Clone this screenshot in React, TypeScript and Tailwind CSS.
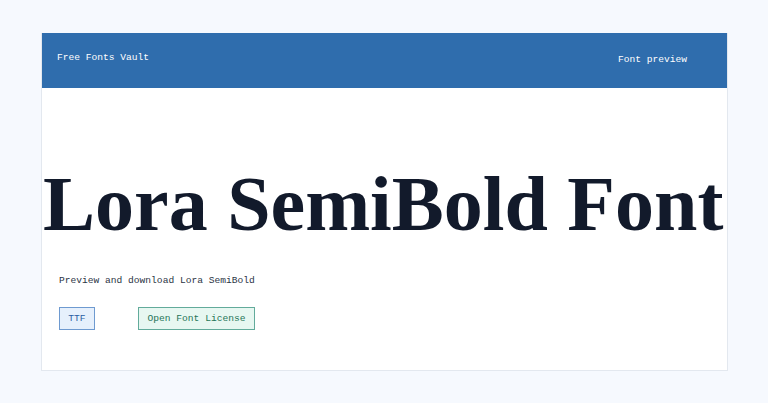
import React from 'react';

const mono = { fontFamily: '"Liberation Mono", monospace' };

const App: React.FC = () => {
  return (
    <div className="min-h-screen w-full bg-[#f6f9fe] pt-[33px] px-[41px]">
      <div className="w-[687px] h-[338px] bg-white border border-[#e3e8ef] border-t-0 flex flex-col">
        {/* Header */}
        <header
          className="h-[55px] bg-[#2f6dad] flex items-start justify-between pl-[15px] pr-[40px] text-white text-[9.6px]"
          style={mono}
        >
          <span className="mt-[18px]">Free Fonts Vault</span>
          <span className="mt-[20px]">Font preview</span>
        </header>

        <main className="flex flex-col">
          <h1
            className="mt-[77px] text-[#121a2b] text-[78px] font-bold leading-none whitespace-nowrap ml-[1px]"
            style={{ fontFamily: '"Liberation Serif", serif' }}
          >
            Lora SemiBold Font
          </h1>

          <p className="mt-[31px] ml-[17px] text-[9.6px] text-[#2b3445]" style={mono}>
            Preview and download Lora SemiBold
          </p>

          <div className="mt-[19px] ml-[17px] flex gap-[43px] text-[9.6px]" style={mono}>
            <span className="h-[23px] w-[36px] flex items-center justify-center bg-[#e6f0fc] border border-[#6e9ad0] text-[#2a5ea3]">
              TTF
            </span>
            <span className="h-[23px] w-[117px] flex items-center justify-center bg-[#e7f7f1] border border-[#62ab9b] text-[#1f7558]">
              Open Font License
            </span>
          </div>
        </main>
      </div>
    </div>
  );
};

export default App;
